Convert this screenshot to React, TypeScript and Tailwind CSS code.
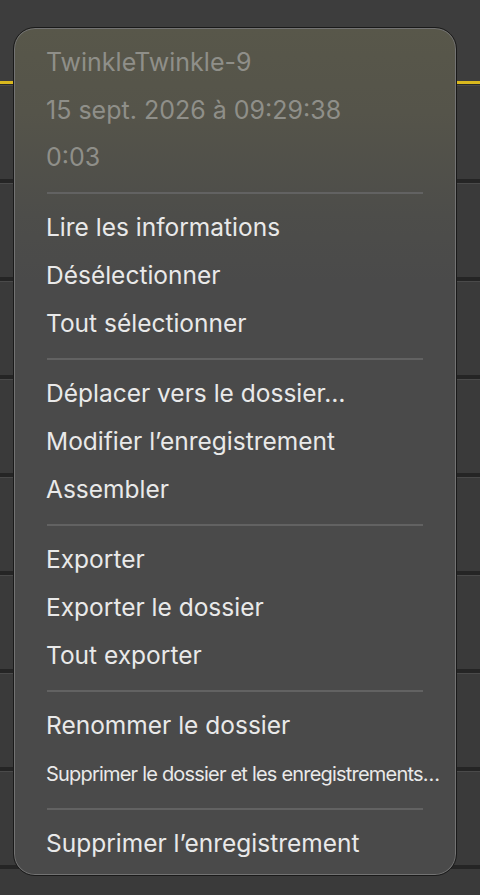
import React from 'react';

const groups: string[][] = [
  ['Lire les informations', 'Désélectionner', 'Tout sélectionner'],
  ['Déplacer vers le dossier…', 'Modifier l’enregistrement', 'Assembler'],
  ['Exporter', 'Exporter le dossier', 'Tout exporter'],
  ['Renommer le dossier', 'Supprimer le dossier et les enregistrements…'],
  ['Supprimer l’enregistrement'],
];

const header = ['TwinkleTwinkle-9', '15 sept. 2026 à 09:29:38', '0:03'];

const Separator = () => <div className="mx-[33px] my-[10px] h-[2px] bg-[#626262]" />;

export default function App() {
  return (
    <div className="relative h-[895px] w-[480px] overflow-hidden bg-[#3a3a3a]" style={{ fontFamily: 'Inter, "Noto Sans", sans-serif' }}>
      {/* background list */}
      <div className="flex flex-col">
        <div className="h-[81px] bg-[#3d3d3d]" />
        <div className="h-[3px] bg-[#d9b81e]" />
        <div className="h-[1px] bg-[#2a2a2a]" />
        {[0, 1, 2, 3, 4, 5, 6, 7].map((i) => (
          <div key={i} className="h-[98px] border-b-[4px] border-[#252525] bg-[#3a3a3a] shadow-[inset_0_1px_0_#4a4a4a]" />
        ))}
      </div>

      {/* context menu */}
      <div className="absolute left-[13px] top-[27px] h-[849px] w-[444px] rounded-[22px] border border-[#1a1a1a] bg-[linear-gradient(180deg,#58574a_0%,#55544a_10%,#4d4d4a_22%,#4a4a4a_30%,#4a4a4a_100%)] shadow-[inset_0_0_0_1px_#737373]">
        <div className="flex flex-col pt-[11px]">
          {header.map((t) => (
            <div key={t} className="flex h-[47.5px] items-center whitespace-nowrap pl-[32px] text-[25px] text-[#8f8f89]">
              {t}
            </div>
          ))}
          {groups.map((g, gi) => (
            <React.Fragment key={gi}>
              <Separator />
              {g.map((t) => (
                <div
                  key={t}
                  className={`flex h-[48px] items-center whitespace-nowrap pl-[32px] text-[#e9e9e9] ${
                    t.startsWith('Supprimer le dossier') ? 'text-[20px] tracking-[-0.8px]' : 'text-[24.5px]'
                  }`}
                >
                  {t}
                </div>
              ))}
            </React.Fragment>
          ))}
        </div>
      </div>
    </div>
  );
}
